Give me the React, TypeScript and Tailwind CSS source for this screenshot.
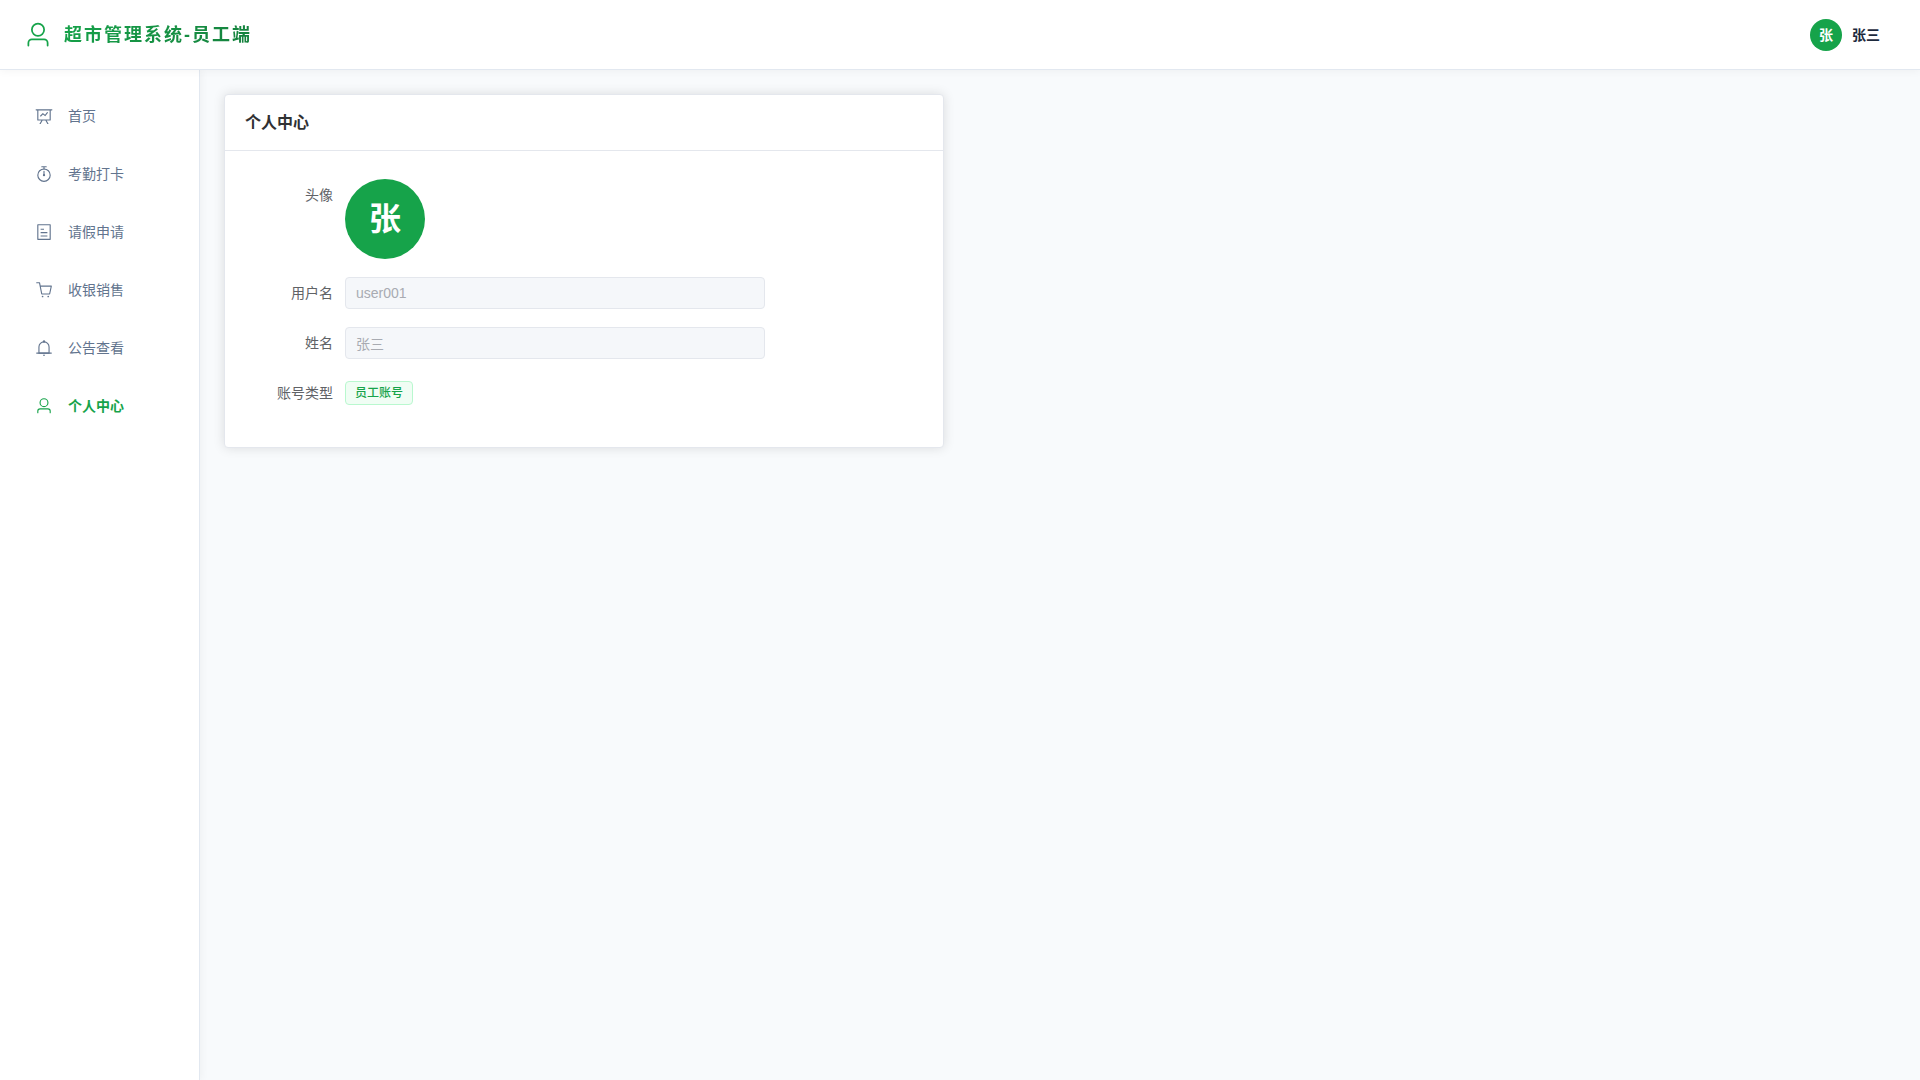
import { useState } from "react";
import clsx from "clsx";

const USER_PATHS = [
  "M512 512a192 192 0 1 0 0-384 192 192 0 0 0 0 384m0 64a256 256 0 1 1 0-512 256 256 0 0 1 0 512m320 320v-96a96 96 0 0 0-96-96H288a96 96 0 0 0-96 96v96a32 32 0 1 1-64 0v-96a160 160 0 0 1 160-160h448a160 160 0 0 1 160 160v96a32 32 0 1 1-64 0",
];

const MENU = [
  {
    path: "#/home",
    label: "首页",
    icon: [
      "M359.168 768H160a32 32 0 0 1-32-32V192H64a32 32 0 0 1 0-64h896a32 32 0 1 1 0 64h-64v544a32 32 0 0 1-32 32H665.216l110.848 192h-73.856L591.36 768H433.024L322.176 960H248.32zM832 192H192v512h640zM342.656 534.656a32 32 0 1 1-45.312-45.312L444.992 341.76l125.44 94.08L679.04 300.032a32 32 0 1 1 49.92 39.936L581.632 524.224 451.008 426.24 342.656 534.592z",
    ],
  },
  {
    path: "#/attendance",
    label: "考勤打卡",
    icon: [
      "M512 896a320 320 0 1 0 0-640 320 320 0 0 0 0 640m0 64a384 384 0 1 1 0-768 384 384 0 0 1 0 768",
      "M512 320a32 32 0 0 1 32 32l-.512 224a32 32 0 1 1-64 0L480 352a32 32 0 0 1 32-32",
      "M448 576a64 64 0 1 0 128 0 64 64 0 1 0-128 0m96-448v128h-64V128h-96a32 32 0 0 1 0-64h256a32 32 0 1 1 0 64z",
    ],
  },
  {
    path: "#/leave",
    label: "请假申请",
    icon: [
      "M192 128v768h640V128zm-32-64h704a32 32 0 0 1 32 32v832a32 32 0 0 1-32 32H160a32 32 0 0 1-32-32V96a32 32 0 0 1 32-32m160 448h384v64H320zm0-192h192v64H320zm0 384h384v64H320z",
    ],
  },
  {
    path: "#/cashier",
    label: "收银销售",
    icon: [
      "M432 928a48 48 0 1 1 0-96 48 48 0 0 1 0 96m320 0a48 48 0 1 1 0-96 48 48 0 0 1 0 96M96 128a32 32 0 0 1 0-64h160a32 32 0 0 1 31.36 25.728L320.64 256H928a32 32 0 0 1 31.296 38.72l-96 448A32 32 0 0 1 832 768H384a32 32 0 0 1-31.36-25.728L229.76 128zm314.24 576h395.904l82.304-384H333.44z",
    ],
  },
  {
    path: "#/notice",
    label: "公告查看",
    icon: [
      "M512 64a64 64 0 0 1 64 64v64H448v-64a64 64 0 0 1 64-64",
      "M256 768h512V448a256 256 0 1 0-512 0zm256-640a320 320 0 0 1 320 320v384H192V448a320 320 0 0 1 320-320",
      "M96 768h832q32 0 32 32t-32 32H96q-32 0-32-32t32-32m352 128h128a64 64 0 0 1-128 0",
    ],
  },
  { path: "#/profile", label: "个人中心", icon: USER_PATHS },
];

const user = { username: "user001", name: "张三", type: "员工账号" };

function Icon({ paths, className }: { paths: string[]; className: string }) {
  return (
    <svg viewBox="0 0 1024 1024" fill="currentColor" className={className} aria-hidden="true">
      {paths.map((d) => (
        <path key={d} d={d} />
      ))}
    </svg>
  );
}

function Field({ id, label, value }: { id: string; label: string; value: string }) {
  return (
    <div className="flex">
      <label htmlFor={id} className="w-[100px] shrink-0 pr-3 text-right leading-8">
        {label}
      </label>
      <input
        id={id}
        value={value}
        disabled
        readOnly
        className="h-8 w-full max-w-[420px] rounded border border-[#e4e7ed] bg-[#f5f7fa] px-[10px] text-[#a8abb2]"
      />
    </div>
  );
}

export default function App() {
  const [active, setActive] = useState("#/profile");

  return (
    <div className="flex min-h-screen flex-col bg-[#f8fafc] font-['Liberation_Sans','Noto_Sans_CJK_SC',sans-serif] text-sm">
      <header className="z-20 flex h-[70px] items-center justify-between border-b border-slate-200 bg-white px-6 shadow-[0_2px_8px_rgba(0,0,0,0.04)]">
        <div className="flex items-center gap-3">
          <Icon paths={USER_PATHS} className="size-7 text-[#16a34a]" />
          <h1 className="bg-linear-135 from-[#16a34a] to-[#15803d] bg-clip-text text-lg font-bold tracking-[2px] text-transparent">
            超市管理系统-员工端
          </h1>
        </div>
        <button type="button" className="flex items-center gap-[10px] px-4 font-semibold text-slate-800">
          <span className="flex size-8 items-center justify-center rounded-full bg-[#16a34a] text-white">
            {user.name[0]}
          </span>
          {user.name}
        </button>
      </header>

      <div className="flex flex-1">
        <aside className="z-10 w-[200px] shrink-0 border-r border-slate-200 bg-white px-3 pt-[21px] shadow-[2px_0_8px_rgba(0,0,0,0.04)]">
          <nav className="flex flex-col gap-2">
            {MENU.map((m) => (
              <a
                key={m.path}
                href={m.path}
                onClick={() => setActive(m.path)}
                className={clsx(
                  "flex h-[50px] items-center gap-3 px-5",
                  active === m.path ? "font-semibold text-[#16a34a]" : "text-slate-500"
                )}
              >
                <span className="flex w-6 justify-center">
                  <Icon paths={m.icon} className="size-[18px]" />
                </span>
                {m.label}
              </a>
            ))}
          </nav>
        </aside>

        <main className="flex-1 p-6">
          <section className="max-w-[720px] rounded border border-[#e4e7ed] bg-white shadow-[0_0_12px_rgba(0,0,0,0.12)]">
            <div className="flex h-14 items-center border-b border-[#e4e7ed] px-5">
              <h2 className="text-base font-semibold text-[#303133]">个人中心</h2>
            </div>
            <div className="flex flex-col gap-[18px] px-5 pt-7 pb-[38px] text-[#606266]">
              <div className="flex">
                <span className="w-[100px] shrink-0 pr-3 text-right leading-8">头像</span>
                <span className="flex size-20 items-center justify-center rounded-full bg-[#16a34a] text-[32px] leading-[47px] font-semibold text-white">
                  {user.name[0]}
                </span>
              </div>
              <Field id="username" label="用户名" value={user.username} />
              <Field id="name" label="姓名" value={user.name} />
              <div className="flex items-center">
                <span className="w-[100px] shrink-0 pr-3 text-right leading-8">账号类型</span>
                <span className="flex h-6 items-center rounded border border-green-200 bg-green-50 px-[9px] text-xs font-medium text-[#16a34a]">
                  {user.type}
                </span>
              </div>
            </div>
          </section>
        </main>
      </div>
    </div>
  );
}
